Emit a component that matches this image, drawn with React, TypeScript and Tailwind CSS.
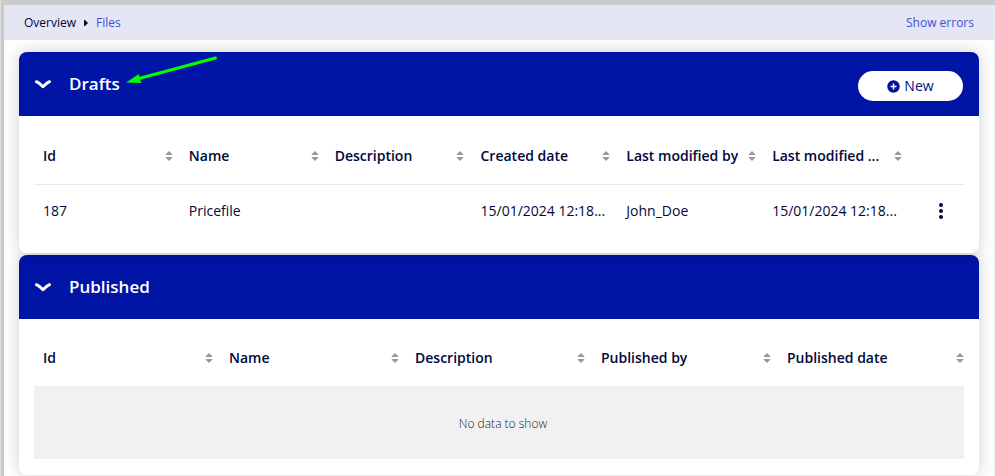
import type { ReactNode } from "react";

function Chevron() {
  return (
    <svg width="18" height="10" viewBox="0 0 18 10" fill="none" aria-hidden="true">
      <path d="M1.500 2.700 Q5 4.300 8 7.700 Q11 4.300 14.500 2.700" stroke="white" strokeWidth="3" strokeLinecap="round" strokeLinejoin="round" />
    </svg>
  );
}

function SortIcon() {
  return (
    <svg width="8" height="10" viewBox="0 0 8 10" fill="#999999" className="shrink-0" aria-hidden="true">
      <path d="M4 0 L7.5 3.6 Q7.4 4 7 4 H1 Q0.6 4 0.5 3.6 Z" />
      <path d="M4 10 L7.5 6.4 Q7.4 6 7 6 H1 Q0.6 6 0.5 6.4 Z" />
    </svg>
  );
}

function HeadCell({ label, last = false }: { label: string; last?: boolean }) {
  return (
    <th scope="col" className={last ? "pl-[9px] text-left font-semibold" : "pl-[9px] pr-[7px] text-left font-semibold"}>
      <button type="button" className="flex h-14 w-full items-center justify-between gap-2 text-left">
        <span className="truncate">{label}</span>
        <SortIcon />
      </button>
    </th>
  );
}

function Section({ title, action, children }: { title: string; action?: ReactNode; children: ReactNode }) {
  return (
    <section className="overflow-hidden rounded-lg bg-white shadow-[0_0_16px_rgba(0,0,0,0.18)]">
      <header className="flex h-16 items-center justify-between bg-[#0014a5] px-4 text-white">
        <div className="flex items-center">
          <button type="button" aria-label={`Collapse ${title}`} className="mr-4 flex h-8 w-[18px] items-center">
            <Chevron />
          </button>
          <h2 className="text-[17px] leading-6 font-semibold">{title}</h2>
        </div>
        {action}
      </header>
      {children}
    </section>
  );
}

const draftColumns = ["Id", "Name", "Description", "Created date", "Last modified by", "Last modified ..."];
const publishedColumns = ["Id", "Name", "Description", "Published by"];
const draft = ["187", "Pricefile", "", "15/01/2024 12:18...", "John_Doe", "15/01/2024 12:18..."];

export default function App() {
  return (
    <div className="border-l border-[#dddddd] font-['Open_Sans','Noto_Sans',sans-serif] text-sm text-[#00083c]">
      <div className="border-t-[5px] border-l-[3px] border-[#cbcbcb]">
        <div className="border-r border-[#eeeeee] bg-[#fefefe]">
          <div className="flex h-[35px] items-center justify-between bg-[#e4e6f3] px-5 text-xs">
            <nav aria-label="Breadcrumb" className="flex items-center">
              <a href="#overview">Overview</a>
              <svg width="4" height="6" viewBox="0 0 4 6" className="mx-2" fill="#00083c" aria-hidden="true">
                <path d="M0 0 H1 L4 3 L1 6 H0 Z" />
              </svg>
              <a href="#files" className="text-[#3f4fd8]">Files</a>
            </nav>
            <a href="#errors" className="text-[#3f4fd8]">Show errors</a>
          </div>

          <main className="flex flex-col gap-0.5 px-[15px] pt-3 pb-px">
            <div className="relative">
              <Section
                title="Drafts"
                action={
                  <button type="button" className="mt-1 flex h-[30px] w-[105px] items-center justify-center gap-1 rounded-full bg-white text-sm text-[#00107e]">
                    <svg width="13" height="13" viewBox="0 0 13 13" aria-hidden="true">
                      <circle cx="6.5" cy="6.5" r="6.2" fill="#001299" />
                      <path d="M6.5 3.5 V9.5 M3.5 6.5 H9.5" stroke="white" strokeWidth="1.5" />
                    </svg>
                    New
                  </button>
                }
              >
                <div className="px-[15px] pt-3 pb-[15px]">
                  <table className="w-full table-fixed border-collapse">
                    <colgroup>
                      <col span={6} />
                      <col className="w-[55px]" />
                    </colgroup>
                    <thead>
                      <tr className="border-b border-[#eaeaea]">
                        {draftColumns.map((c) => <HeadCell key={c} label={c} />)}
                        <td />
                      </tr>
                    </thead>
                    <tbody>
                      <tr className="h-[53px]">
                        {draft.map((v, i) => (
                          <td key={i} className="truncate pl-[9px]">{v}</td>
                        ))}
                        <td className="pl-5">
                          <button type="button" aria-label="Row actions" className="flex h-6 w-6 items-center justify-center">
                            <svg width="4" height="16" viewBox="0 0 4 16" fill="#00083c" aria-hidden="true">
                              <circle cx="2" cy="2" r="2" />
                              <circle cx="2" cy="8" r="2" />
                              <circle cx="2" cy="14" r="2" />
                            </svg>
                          </button>
                        </td>
                      </tr>
                    </tbody>
                  </table>
                </div>
              </Section>
              <svg width="94" height="30" viewBox="0 0 94 30" className="pointer-events-none absolute top-1 left-[106px]" aria-hidden="true">
                <path d="M90.500 2 L14 22.500" stroke="#00ff00" strokeWidth="3" strokeLinecap="round" />
                <path d="M1 26.500 L14 18 L14.500 22.500 L16.500 27 Z" fill="#00ff00" />
              </svg>
            </div>

            <Section title="Published">
              <div className="px-[15px] pt-[11px] pb-4">
                <table className="w-full table-fixed border-collapse">
                  <thead>
                    <tr>
                      {publishedColumns.map((c) => <HeadCell key={c} label={c} />)}
                      <HeadCell label="Published date" last />
                    </tr>
                  </thead>
                  <tbody>
                    <tr>
                      <td colSpan={5} className="h-[73px] bg-[#f1f1f1] pt-1 pl-2 text-center text-xs font-light text-[#20242c]">
                        No data to show
                      </td>
                    </tr>
                  </tbody>
                </table>
              </div>
            </Section>
          </main>
        </div>
      </div>
    </div>
  );
}
